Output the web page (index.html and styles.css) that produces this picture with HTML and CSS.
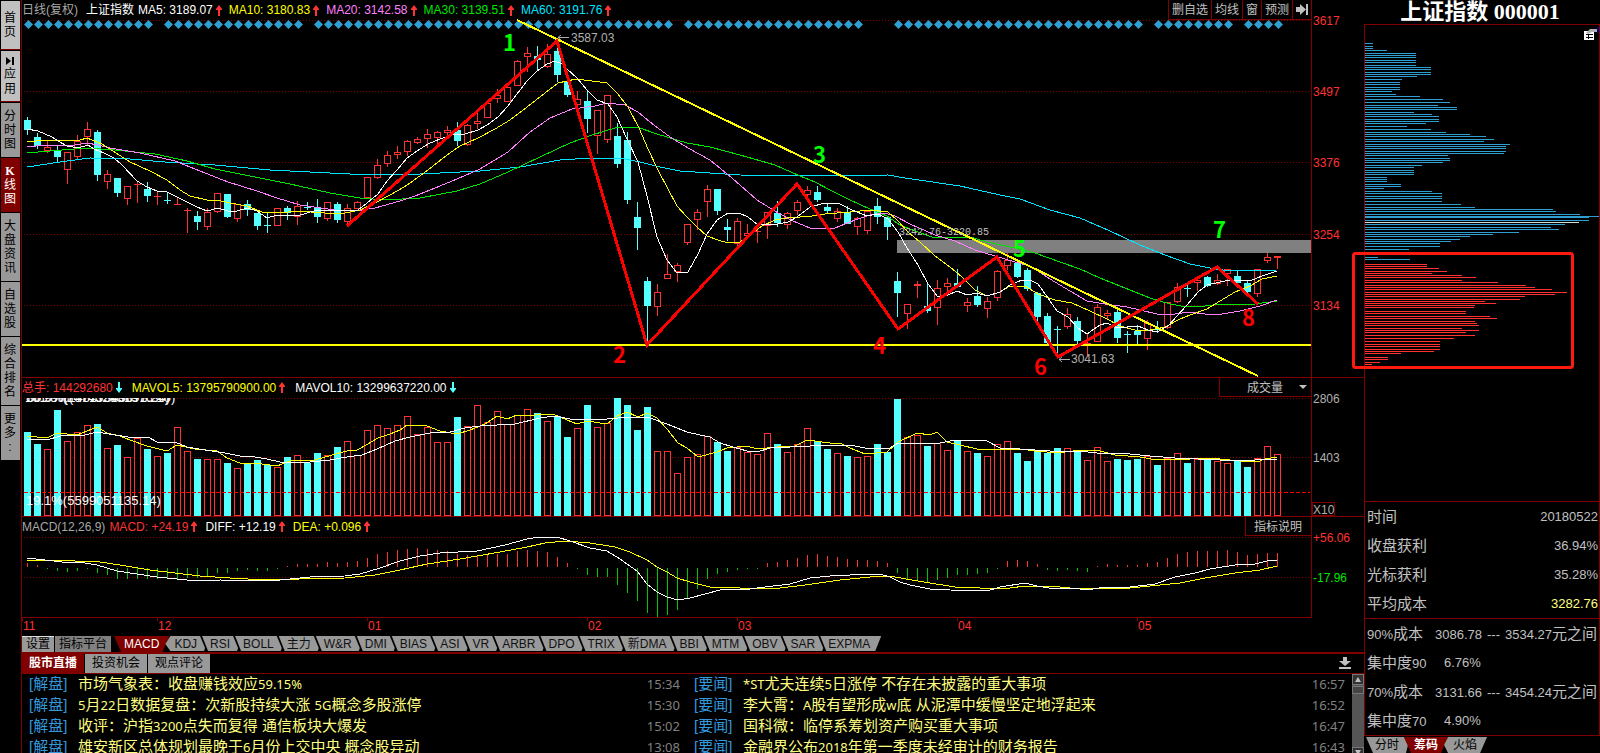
FILE: index.html
```html
<!DOCTYPE html>
<html lang="zh-CN">
<head>
<meta charset="utf-8">
<title>上证指数 000001</title>
<link rel="stylesheet" href="styles.css">
</head>
<body>
<svg class="defs" aria-hidden="true">
  <symbol id="up" viewBox="0 0 6 11"><path d="M2 11V5H0V4L3 0L6 4V5H4V11Z"/></symbol>
  <symbol id="down" viewBox="0 0 6 11"><path d="M2 0V6H0V7L3 11L6 7V6H4V0Z"/></symbol>
</svg>
<div class="app">
  <nav class="side">
    <button class="light tall">首页</button>
    <button class="light"><svg class="play" viewBox="0 0 8 8"><path d="M0 0L5 4L0 8ZM6 0H8V8H6Z"/></svg>应用</button>
    <button>分时图</button>
    <button class="on"><b>K</b>线图</button>
    <button>大盘资讯</button>
    <button>自选股</button>
    <button>综合排名</button>
    <button>更多:</button>
  </nav>

  <main class="center">
    <section class="pane">
      <header class="bar first">
        <span class="grey">日线(复权)</span>
        <span class="name">上证指数</span>
        <span class="item white">MA5: 3189.07<svg class="arrow"><use href="#up"/></svg></span>
        <span class="item yellow">MA10: 3180.83<svg class="arrow"><use href="#up"/></svg></span>
        <span class="item pink">MA20: 3142.58<svg class="arrow"><use href="#up"/></svg></span>
        <span class="item green">MA30: 3139.51<svg class="arrow"><use href="#up"/></svg></span>
        <span class="item aqua">MA60: 3191.76<svg class="arrow"><use href="#up"/></svg></span>
        <div class="tools">
          <button>删自选</button><button>均线</button><button>窗</button><button>预测</button><button aria-label="展开"><svg class="next" viewBox="0 0 12 11"><path d="M0 3H4V0L10 5.5L4 11V8H0ZM10 0H12V11H10Z"/></svg></button>
        </div>
      </header>
      <svg class="chart" id="price" viewBox="22 20 1342 357"></svg>
    </section>

    <section class="pane">
      <header class="bar wide">
        <span class="item red">总手: 144292680<svg class="arrow cyan"><use href="#down"/></svg></span>
        <span class="item yellow">MAVOL5: 13795790900.00<svg class="arrow"><use href="#up"/></svg></span>
        <span class="item white">MAVOL10: 13299637220.00<svg class="arrow cyan"><use href="#down"/></svg></span>
        <div class="picker"><select aria-label="指标"><option>成交量</option></select><i class="caret"></i></div>
      </header>
      <svg class="chart" id="volume" viewBox="22 397 1342 119"></svg>
    </section>

    <section class="pane">
      <header class="bar">
        <span class="lead grey">MACD(12,26,9)</span>
        <span class="item red">MACD: +24.19<svg class="arrow"><use href="#up"/></svg></span>
        <span class="item white">DIFF: +12.19<svg class="arrow"><use href="#up"/></svg></span>
        <span class="item yellow">DEA: +0.096<svg class="arrow"><use href="#up"/></svg></span>
        <button class="explain">指标说明</button>
      </header>
      <svg class="chart" id="macd" viewBox="22 536 1342 100"></svg>
    </section>

    <div class="indicators">
      <button class="set">设置</button><button class="set dark">指标平台</button>
      <button class="tab on">MACD</button><button class="tab after">KDJ</button><button class="tab">RSI</button><button class="tab">BOLL</button><button class="tab">主力</button><button class="tab">W&amp;R</button><button class="tab">DMI</button><button class="tab">BIAS</button><button class="tab">ASI</button><button class="tab">VR</button><button class="tab">ARBR</button><button class="tab">DPO</button><button class="tab">TRIX</button><button class="tab">新DMA</button><button class="tab">BBI</button><button class="tab">MTM</button><button class="tab">OBV</button><button class="tab">SAR</button><button class="tab last">EXPMA</button>
    </div>

    <section class="news">
      <header class="newsbar">
        <button class="on">股市直播</button><button>投资机会</button><button>观点评论</button>
        <svg class="save" viewBox="0 0 12 12"><path d="M4 0H8V4H12L6 9L0 4H4ZM0 10H12V12H0Z"/></svg>
      </header>
      <div class="feeds">
        <ul>
          <li><span class="tag">[解盘]</span><a href="#">市场气象表：收盘赚钱效应<span class="num">59.15%</span></a><time>15:34</time></li>
          <li><span class="tag">[解盘]</span><a href="#"><span class="num">5</span>月<span class="num">22</span>日数据复盘：次新股持续大涨 <span class="num">5G</span>概念多股涨停</a><time>15:30</time></li>
          <li><span class="tag">[解盘]</span><a href="#">收评：沪指<span class="num">3200</span>点失而复得 通信板块大爆发</a><time>15:02</time></li>
          <li><span class="tag">[解盘]</span><a href="#">雄安新区总体规划最晚于<span class="num">6</span>月份上交中央 概念股异动</a><time>13:08</time></li>
        </ul>
        <ul>
          <li><span class="tag">[要闻]</span><a href="#"><span class="num">*ST</span>尤夫连续<span class="num">5</span>日涨停 不存在未披露的重大事项</a><time>16:57</time></li>
          <li><span class="tag">[要闻]</span><a href="#">李大霄：<span class="num">A</span>股有望形成<span class="num">w</span>底 从泥潭中缓慢坚定地浮起来</a><time>16:52</time></li>
          <li><span class="tag">[要闻]</span><a href="#">国科微：临停系筹划资产购买重大事项</a><time>16:47</time></li>
          <li><span class="tag">[要闻]</span><a href="#">金融界公布<span class="num">2018</span>年第一季度未经审计的财务报告</a><time>16:43</time></li>
        </ul>
        <div class="scroll">
          <button aria-label="向上"><i class="tri"></i></button>
          <div class="thumb"></div>
          <button class="end" aria-label="向下"><i class="tri flip"></i></button>
        </div>
      </div>
    </section>
  </main>

  <aside class="right">
    <h1>上证指数 000001</h1>
    <div class="chips">
      <svg class="dist" id="dist" viewBox="1365 25 234 476"></svg>
      <dl class="stats">
        <div><dt>时间</dt><dd>20180522</dd></div>
        <div><dt>收盘获利</dt><dd>36.94%</dd></div>
        <div><dt>光标获利</dt><dd>35.28%</dd></div>
        <div><dt>平均成本</dt><dd class="cost">3282.76</dd></div>
      </dl>
      <dl class="stats ranges">
        <div><dt><span>90%</span>成本</dt><dd class="span"><span>3086.78</span><span>---</span><span><span>3534.27</span><b>元之间</b></span></dd></div>
        <div><dt>集中度<span>90</span></dt><dd class="pct">6.76%</dd></div>
        <div><dt><span>70%</span>成本</dt><dd class="span"><span>3131.66</span><span>---</span><span><span>3454.24</span><b>元之间</b></span></dd></div>
        <div><dt>集中度<span>70</span></dt><dd class="pct">4.90%</dd></div>
      </dl>
    </div>
    <div class="foot"><button>分时</button><button class="on">筹码</button><button class="after">火焰</button></div>
  </aside>
</div>
<script src="chart.js"></script>
</body>
</html>
```

FILE: styles.css
```css
* { box-sizing: border-box; }
body {
  margin: 0;
  background: #000;
  color: #c0c0c0;
  font: 12px/19px "Liberation Sans", "Noto Sans CJK SC", sans-serif;
}
button, select { font: inherit; color: inherit; background: none; border: 0; padding: 0; margin: 0; white-space: nowrap; }
ul, dl, dd, h1 { margin: 0; padding: 0; }
.defs { display: none; }
svg { display: block; }
.app { display: grid; grid-template-columns: 21px minmax(0, 1fr) 236px; height: 100vh; min-height: 753px; }

/* left navigation */
.side { display: flex; flex-direction: column; gap: 1px; padding: 1px 1px 0; align-items: stretch; }
.side button {
  background: #999; color: #000; line-height: 14px; padding: 6px 4px 6px 3px;
  white-space: normal; line-break: anywhere; text-align: center;
}
.side .light { background: #c0c0c0; box-shadow: 0 1px 0 #800000; margin-bottom: 1px; }
.side .light + .light { line-height: 15px; padding-top: 4px; padding-bottom: 4px; }
.side .tall { padding-top: 10px; padding-bottom: 10px; }
.side .on { background: #800000; color: #fff; }
.side b { font: bold 12px/14px "Liberation Serif", serif; display: block; }
.play { width: 8px; height: 8px; margin: 2px auto; }

/* chart panes */
.center { display: flex; flex-direction: column; min-width: 0; border-left: 1px solid #800000; }
.pane + .pane { border-top: 1px solid #800000; }
.bar { display: flex; align-items: stretch; height: 19px; line-height: 20px; margin-right: 52px; border-right: 1px solid #800000; white-space: nowrap; }
.bar.first { height: 20px; line-height: 21px; }
.item { display: flex; align-items: center; gap: 3px; margin-right: 8px; }
.bar.first .item { margin-right: 7px; }
.wide .item { margin-right: 10px; }
.name { color: #fff; margin: 0 4px 0 8px; }
.lead { margin-right: 4px; }
.arrow { width: 6px; height: 11px; fill: #f33; }
.arrow.cyan { fill: #5ff; }
.grey { color: #a8a8a8; }
.white { color: #fff; }
.yellow { color: #ff0; }
.pink { color: #ff80ff; }
.green { color: #00e600; }
.aqua { color: #00e5ff; }
.red { color: #f33; }
.tools { display: flex; margin-left: auto; border-bottom: 1px solid #800000; }
.tools button { border-left: 1px solid #800000; padding: 0 3px; line-height: 20px; }
.next { width: 12px; height: 11px; fill: #c0c0c0; }
.picker { position: relative; margin-left: auto; border-left: 1px solid #800000; border-bottom: 1px solid #800000; }
.picker select { appearance: none; width: 91px; padding-left: 27px; line-height: 20px; height: 18px; }
.caret { position: absolute; right: 4px; top: 7px; border: 4px solid transparent; border-top-color: #c0c0c0; border-bottom: 0; }
.explain { margin-left: auto; padding: 0 9px 0 8px; border-left: 1px solid #800000; border-bottom: 1px solid #800000; line-height: 20px; }
.chart { width: 100%; height: auto; overflow: visible; }
.chart text { font: 12px "Liberation Sans", sans-serif; }
.chart .mark { font: bold 22px "Noto Sans CJK SC", sans-serif; }
.chart .gap { font: 10px "Liberation Mono", monospace; }
.chart .ratio { font-size: 13px; }

/* indicator tabs */
.indicators { display: flex; height: 18px; line-height: 17px; border-bottom: 2px solid #800000; color: #000; }
.set { background: #999; padding: 0 4px; margin-right: 1px; border-top: 1px solid #ddd; line-height: 15px; }
.set.dark { background: #808080; border-top-color: #808080; margin-right: 3px; }
.tab {
  background: #999; color: #111; padding: 0 9px; margin-left: -5px; height: 15px;
  clip-path: polygon(1px 0, calc(100% - 6px) 0, calc(100% - 1px) 12px, calc(100% - 2px) 100%, 7px 100%);
}
.tab.on { background: #800000; color: #fff; padding: 0 10px; margin-left: 0; clip-path: polygon(0 0, 100% 0, calc(100% - 7px) 100%, 7px 100%); height: 16px; }
.tab.after { margin-left: -4px; clip-path: polygon(5px 0, calc(100% - 6px) 0, calc(100% - 1px) 12px, calc(100% - 2px) 100%, 5px 100%, 0 8px); }
.tab.last { padding-right: 11px; clip-path: polygon(1px 0, 100% 0, calc(100% - 6px) 100%, 7px 100%); }

/* news */
.news { display: flex; flex-direction: column; flex: 1; min-height: 0; border-bottom: 1px solid #800000; }
.newsbar { display: flex; gap: 1px; height: 20px; border-bottom: 1px solid #800000; }
.newsbar button { background: #999; color: #000; padding: 0 7px; }
.newsbar .on { background: #800000; color: #fff; font-weight: bold; }
.save { width: 12px; height: 12px; margin: 3px 13px 0 auto; fill: #c0c0c0; }
.feeds { display: flex; flex: 1; min-height: 0; overflow: hidden; }
.feeds ul { flex: 1; min-width: 0; list-style: none; padding: 0 7px; }
.feeds li { display: flex; height: 21px; line-height: 19px; font-size: 15px; white-space: nowrap; }
.tag { flex: 0 0 49px; color: #3399dd; }
.feeds a { flex: 1; color: #ffff80; text-decoration: none; }
.num, time { font-size: 13px; font-family: "Noto Sans", sans-serif; }
time { color: #808080; line-height: 21px; }
.scroll { display: flex; flex-direction: column; width: 12px; background: #555; }
.scroll button { height: 11px; background: #333; border: 1px solid #777; display: flex; align-items: center; justify-content: center; }
.scroll .end { margin-top: auto; }
.thumb { height: 8px; margin-top: 1px; background: #444; border: 1px solid #777; }
.tri { border: 3px solid transparent; border-bottom: 5px solid #c0c0c0; border-top: 0; }
.flip { transform: rotate(180deg); }

/* right panel */
.right { display: flex; flex-direction: column; }
h1 { height: 24px; padding-right: 4px; color: #fff; font: bold 22px/24px "Liberation Serif", "Noto Sans CJK SC", serif; text-align: center; }
.chips { border: 1px solid #800000; }
.dist { width: 100%; height: auto; overflow: visible; }
.stats { border-top: 1px solid #800000; font-size: 13px; }
.stats div { display: flex; justify-content: space-between; align-items: center; height: 29px; padding: 0 1px 0 2px; }
.ranges div { padding-right: 2px; }
.stats dt, .stats b { font-size: 15px; font-weight: normal; }
.stats dt span { font-size: 13px; }
.stats .cost { color: #ffff80; }
.ranges dt { flex: 0 0 68px; }
.ranges .span { display: flex; flex: 1; justify-content: space-between; align-items: baseline; }
.ranges .pct { flex: 1; padding-left: 9px; }
.foot { display: flex; height: 16px; line-height: 17px; padding-left: 2px; margin-top: 1px; }
.foot button { background: #999; color: #000; padding: 0 9px; clip-path: polygon(0 0, calc(100% - 4px) 0, 100% 8px, calc(100% - 2px) 100%, 7px 100%); }
.foot .on { background: #800000; color: #fff; margin-left: -4px; clip-path: polygon(0 0, 100% 0, calc(100% - 7px) 100%, 7px 100%); font-weight: bold; padding: 0 10px; }
.foot .after { margin-left: -4px; padding-right: 10px; clip-path: polygon(4px 0, 100% 0, calc(100% - 7px) 100%, 4px 100%, 0 8px); }
```

FILE: chart.js
```js
const NS = 'http://www.w3.org/2000/svg';
const STEP = 10, X0 = 27;
const RED = '#ff3232', CYAN = '#54ffff', FRAME = '#800000', GREEN = '#00c800';

function add(svg, tag, attrs, text) {
  const el = document.createElementNS(NS, tag);
  for (const k in attrs) el.setAttribute(k, attrs[k]);
  if (text) el.textContent = text;
  svg.appendChild(el);
  return el;
}
const rect = (s, x, y, w, h, fill) => add(s, 'rect', { x, y, width: w, height: h, fill });
const box = (s, x, y, w, h, stroke) => add(s, 'rect', { x: x + 0.5, y: y + 0.5, width: w - 1, height: h - 1, fill: '#000', stroke });
const label = (s, x, y, fill, text, cls) => add(s, 'text', { x, y, fill, class: cls || '' }, text);
function curve(s, pts, stroke, width = 1) {
  return add(s, 'polyline', { points: pts, fill: 'none', stroke, 'stroke-width': width, 'shape-rendering': 'crispEdges' });
}
function dotted(s, y, stroke = FRAME, dash = '1 2') {
  add(s, 'line', { x1: 24, x2: 1310, y1: y + 0.5, y2: y + 0.5, stroke, 'stroke-dasharray': dash, 'shape-rendering': 'crispEdges' });
}

/* kind, high, body top, body bottom, low */
const candles = `c 117 120 130 135|c 133 137 146 149|r 141 147 151 153|c 146 151 157 163|r 152 152 170 184|r 135 141 157 160|r 122 129 137 145|c 130 132 175 181|r 170 174 182 189|c 178 178 193 197
r 186 186 199 205|r 182 184 185 203|c 182 189 196 202|r 191 196 197 205|c 193 200 201 204|r 197 204 205 205|r 208 210 211 233|c 211 216 222 230|r 208 212 227 230|r 193 193 212 213
c 194 194 217 218|r 204 204 219 222|c 200 204 210 216|c 213 213 226 230|c 212 225 226 233|r 208 208 226 226|c 206 208 213 220|r 201 206 217 225|c 202 207 208 210|c 199 208 217 223
r 202 202 219 221|c 202 204 220 223|r 204 208 222 226|r 201 202 209 209|r 177 177 198 198|r 159 165 178 179|r 151 155 164 167|r 146 152 155 159|r 140 141 152 156|r 137 139 143 144
r 129 134 139 148|r 131 132 138 144|r 126 130 133 135|c 122 130 141 146|r 124 125 145 146|r 113 121 124 129|r 102 103 118 118|r 89 95 99 103|r 87 87 102 102|r 60 61 86 86
r 47 53 57 72|c 46 56 60 71|r 44 54 67 68|c 40 51 75 82|c 79 81 95 97|r 91 99 105 115|c 91 101 119 133|r 110 110 136 154|r 95 95 140 143|c 123 136 164 168
c 132 140 200 204|c 202 217 228 250|c 277 281 306 343|r 284 292 307 316|r 254 274 279 279|r 263 265 272 282|r 224 224 243 245|r 209 212 220 230|r 185 189 202 217|c 189 189 211 215
c 219 227 230 241|r 218 221 244 246|r 224 233 236 237|r 227 231 232 243|r 212 212 226 239|c 201 213 223 227|r 212 213 225 229|r 200 202 211 215|r 186 190 195 196|c 186 192 200 202
c 204 207 211 213|r 208 211 219 222|c 206 212 224 224|r 217 218 227 235|r 210 211 231 234|c 198 206 217 224|c 216 217 227 240|c 272 281 293 317|r 304 304 314 329|r 281 284 286 298
c 284 306 311 313|r 280 288 308 325|r 278 283 287 292|c 269 283 287 287|r 298 302 306 312|c 286 296 305 307|r 297 301 309 318|r 270 271 298 301|r 253 260 266 270|c 263 263 277 278
c 268 270 289 291|c 292 293 317 321|c 313 316 343 344|c 326 329 330 354|r 308 314 327 329|c 317 321 341 344|r 333 343 344 356|r 304 307 342 342|r 310 313 316 320|c 310 312 338 343
c 331 334 335 353|c 325 331 335 344|r 320 323 339 350|c 321 329 330 333|r 302 302 328 329|r 283 287 302 303|c 284 288 289 297|r 278 280 283 291|c 276 277 286 287|r 274 280 284 285
r 269 269 274 286|c 270 276 283 284|c 281 283 292 293|r 269 269 294 297|r 253 257 261 263|r 256 256 258 269`
  .split(/[|\n]/).map(s => { const [k, ...v] = s.split(' '); return [k, ...v.map(Number)]; });

const volumes = `432 444 449 410 441 432 425 424 448 445 457 438 449 456 453 427 451 459 459 459 463 468 463 460 465 467 457 455 463 453
455 447 441 455 430 425 428 425 416 434 427 442 442 417 426 405 422 411 424 415 409 413 421 416 437 428 405 427 423 398
405 430 407 451 451 473 457 454 436 442 451 447 452 454 433 444 452 444 428 441 449 453 456 457 456 444 452 399 437 435
446 443 450 440 451 453 456 444 441 453 461 450 453 448 448 450 460 447 461 459 460 459 456 465 458 453 463 459 458 461
463 461 467 458 446 454`.split(/\s+/).map(Number);

const bars = `563 565 569 571 572 571 569 573 575 579 579 579 579 579 579 579 578 578 577 573 573 571 570 571 571 569 566 564 564 564
562 563 562 561 558 554 552 550 549 548 549 550 551 554 555 555 555 554 554 551 550 551 552 557 563 569 575 577 577 585
593 601 613 617 615 610 598 589 579 574 572 570 569 569 563 562 560 558 555 554 556 557 559 560 560 561 563 573 579 580
582 580 578 575 575 574 573 569 561 560 561 564 570 571 570 571 572 566 564 565 565 565 563 562 558 554 552 551 551 551
550 552 555 554 553 553`.split(/\s+/).map(Number);

/* price pane */
const price = document.getElementById('price');
[[20, 3617], [91, 3497], [162, 3376], [234, 3254], [305, 3134]].forEach(([y, v]) => {
  dotted(price, y);
  label(price, 1313, y + 5, RED, String(v));
});
rect(price, 1311, 20, 1, 357, FRAME);
rect(price, 897, 240, 414, 13, '#808080');
const noMark = new Set([13, 28, 65, 84, 85, 86, 112, 121]);
for (let i = 0; i < 126; i++) {
  if (noMark.has(i)) continue;
  const x = X0 + 1.5 + i * STEP;
  add(price, 'path', { d: `M${x} 20l4.5 4.5l-4.5 4.5l-4.5 -4.5z`, fill: '#2e9fd0' });
}
candles.forEach(([k, hi, top, bot, lo], i) => {
  const x = X0 + i * STEP, col = k === 'c' ? CYAN : RED;
  rect(price, x, hi, 1, Math.max(1, lo - hi), col);
  if (k === 'c' || bot - top <= 2) rect(price, x - 3, top, 7, bot - top, col);
  else box(price, x - 3, top, 7, bot - top, col);
});
curve(price, '27,167 60,162 90,158 130,159 165,162 215,165 270,170 350,174 420,174 480,171 520,167 560,160 590,158 620,158 640,162 660,167 680,171 740,175 800,176 888,175 905,178 960,186 1000,195 1020,199 1050,210 1080,218 1110,231 1140,245 1165,255 1190,264 1215,269 1230,271 1277,270', '#00e5ff');
curve(price, '27,153 50,151 87,148 115,150 155,154 187,161 215,169 250,176 290,184 330,193 360,198 385,200 420,198 457,191 480,184 508,172 540,157 570,143 592,135 615,128 637,127 657,134 687,143 710,147 740,155 775,165 800,176 815,182 830,190 850,200 870,209 887,216 900,225 915,231 935,238 970,237 987,242 1015,248 1035,253 1060,262 1080,269 1100,278 1125,288 1150,298 1170,304 1187,307 1205,306 1222,304 1255,304 1277,301', '#00e600');
curve(price, '27,147 45,145 75,145 87,143 98,145 110,148 140,153 175,161 200,171 228,182 257,191 277,198 300,205 335,210 355,211 375,208 400,201 415,196 440,186 457,179 480,169 508,152 530,132 550,118 572,109 595,106 607,103 625,105 638,112 650,122 670,137 688,148 710,160 732,178 757,200 778,213 793,221 810,228 820,228 835,228 855,220 870,215 885,213 895,216 910,224 935,235 955,241 975,250 995,256 1015,262 1030,266 1050,279 1070,291 1087,301 1105,304 1127,307 1157,314 1175,314 1190,312 1205,314 1222,314 1240,311 1260,306 1277,300', '#ff80ff');
curve(price, '27,142 45,140 80,140 87,138 102,144 116,153 130,162 150,171 167,180 180,190 190,196 207,200 217,200 230,203 247,206 262,212 280,213 297,211 325,213 345,213 360,210 375,203 390,195 404,187 410,183 428,170 447,155 460,146 478,138 495,129 510,120 527,107 545,93 558,83 576,79 592,81 607,83 617,93 628,107 639,128 648,149 658,170 668,189 677,206 687,217 697,227 707,236 718,240 728,243 740,242 750,235 762,226 775,220 787,218 800,217 812,216 825,214 850,212 870,210 888,212 897,220 908,232 920,242 935,256 950,267 962,277 975,290 987,296 1000,292 1010,286 1025,286 1038,294 1055,300 1072,303 1090,311 1107,319 1120,326 1135,330 1150,330 1165,327 1180,319 1190,315 1207,309 1220,301 1235,292 1250,286 1262,279 1277,276', '#ffff00');
curve(price, '27,129 38,131 52,137 58,141 67,146 78,148 88,145 94,149 104,153 114,158 122,165 137,181 147,187 157,191 167,192 177,197 187,202 197,207 207,211 218,208 228,211 237,211 247,208 257,211 267,218 277,215 297,216 307,213 317,210 347,211 358,210 367,203 378,194 387,181 397,170 407,158 417,151 428,144 440,139 452,135 465,134 478,130 487,125 498,117 508,106 517,94 527,81 537,71 547,64 555,61 562,64 567,69 577,78 587,90 597,100 608,104 617,117 627,139 638,162 647,196 657,237 667,260 677,273 688,272 698,254 707,234 717,220 728,213 739,213 748,217 758,225 778,224 788,222 797,217 810,207 825,203 838,203 852,210 867,216 878,214 888,219 898,232 907,248 918,265 928,284 938,297 948,295 957,291 967,295 977,293 987,296 1000,292 1010,285 1022,280 1030,280 1038,284 1048,298 1057,311 1068,317 1078,328 1087,334 1094,329 1100,325 1107,323 1117,328 1127,327 1138,326 1148,330 1157,332 1168,326 1177,316 1187,305 1198,292 1207,285 1220,282 1230,280 1250,281 1262,276 1277,271', '#ffffff');
curve(price, '22,345 1311,345', '#ffff00', 2);
curve(price, '517,20 1258,376', '#ffff00', 2);
curve(price, '347,226 557,41 647,345 797,184 898,329 997,257 1058,357 1217,267 1258,304', '#ff0000', 3);
[[571, 42, '3587.03', 558, 37], [1071, 363, '3041.63', 1059, 359]].forEach(([x, y, t, ax, ay]) => {
  label(price, x, y, '#b0b0b0', t);
  add(price, 'path', { d: `M${ax} ${ay + 0.5}h11M${ax + 3} ${ay - 2}l-3 2.5l3 2.5`, stroke: '#b0b0b0', fill: 'none' });
});
label(price, 899, 235, '#c0c0c0', '3242.76-3220.85', 'gap');
[[503, 51, '#0f0', 1], [613, 363, '#f00', 2], [813, 163, '#0f0', 3], [873, 354, '#f00', 4],
 [1013, 257, '#0f0', 5], [1034, 375, '#f00', 6], [1213, 238, '#0f0', 7], [1242, 326, '#f00', 8]]
  .forEach(([x, y, c, n]) => label(price, x, y, c, String(n), 'mark'));

/* volume pane */
const volume = document.getElementById('volume');
const clip = add(volume, 'clipPath', { id: 'volclip' });
rect(clip, 22, 398, 1289, 118, '#fff');
dotted(volume, 398);
dotted(volume, 457);
rect(volume, 1311, 397, 1, 119, FRAME);
volumes.forEach((y, i) => {
  const x = X0 - 3 + i * STEP;
  if (candles[i][0] === 'c') rect(volume, x, y, 7, 516 - y, CYAN);
  else box(volume, x, y, 7, 516 - y, RED);
});
dotted(volume, 492, '#ff0000', '4 2');
curve(volume, '27,436 47,438 57,433 77,435 97,427 107,433 120,436 130,440 147,446 167,451 177,445 195,449 217,451 227,458 240,463 262,464 277,466 290,461 315,460 332,455 347,451 357,450 368,444 378,438 390,434 400,430 407,425 427,426 440,431 457,434 470,430 485,424 497,416 507,419 517,415 530,416 540,414 555,415 567,420 577,424 587,421 607,424 617,416 627,412 638,417 647,413 657,418 667,429 678,443 687,448 698,457 717,452 727,448 747,446 757,449 777,447 795,446 807,440 830,443 842,444 850,448 865,454 887,452 898,442 917,433 930,435 937,432 947,442 960,445 977,449 990,450 1020,449 1035,451 1058,453 1080,450 1100,451 1115,455 1140,457 1157,460 1175,459 1190,459 1210,458 1240,461 1257,462 1265,459 1277,457', '#ffff00');
curve(volume, '27,439 47,440 60,436 85,435 97,432 115,435 135,438 148,437 157,442 175,442 187,447 205,450 225,453 240,456 255,457 267,459 280,462 310,462 330,460 347,457 362,455 377,449 395,441 410,437 430,433 450,432 465,428 480,426 515,424 540,418 555,416 575,420 590,419 607,419 630,417 650,418 667,424 687,432 700,435 710,437 720,443 733,447 747,451 757,452 770,448 790,447 830,445 855,446 865,448 890,448 898,443 920,444 940,443 955,440 987,441 1000,448 1020,449 1050,451 1080,451 1105,454 1120,453 1150,456 1175,458 1220,460 1247,461 1255,460 1277,459', '#ffffff');
const clipped = add(volume, 'g', { 'clip-path': 'url(#volclip)' });
['161.8%(47432951976.10)', '80.9%(23715546891.24)', '50.0%(14657389673.30)'].forEach((t, i) => label(clipped, 25 + i, 402, '#fff', t, 'ratio'));
label(volume, 26, 505, '#fff', '19.1%(5599051135.14)', 'ratio');
label(volume, 1313, 403, '#b0b0b0', '2806');
label(volume, 1313, 462, '#b0b0b0', '1403');
box(volume, 1312, 502, 23, 14, FRAME);
label(volume, 1313, 514, '#b0b0b0', 'X10');

/* MACD pane */
const macd = document.getElementById('macd');
dotted(macd, 537);
dotted(macd, 577);
rect(macd, 1311, 536, 1, 82, FRAME);
bars.forEach((y, i) => {
  const x = X0 + i * STEP;
  if (y < 568) rect(macd, x, y, 1, 567 - y, RED);
  else rect(macd, x, 568, 1, y - 568, GREEN);
});
curve(macd, '27,560 60,560 75,561 100,562 120,565 150,570 175,573 200,576 230,578 265,580 300,579 345,578 375,575 400,570 427,564 460,559 500,552 527,547 545,543 565,541 590,543 615,547 630,552 647,560 657,567 667,572 677,578 690,582 710,587 740,588 780,588 805,585 840,580 880,576 895,577 912,580 930,583 955,587 980,588 1010,588 1025,586 1050,586 1070,588 1130,588 1150,586 1180,583 1205,578 1235,573 1260,570 1277,566', '#ffff00');
curve(macd, '27,558 45,560 62,562 85,563 97,565 107,568 117,571 137,574 157,577 177,579 197,581 220,580 270,581 290,579 310,577 345,576 360,574 380,568 400,561 420,556 440,553 477,551 505,545 527,539 540,537 557,537 570,541 590,548 607,551 620,559 637,571 647,584 657,592 667,597 678,600 690,598 705,594 720,590 750,589 765,587 790,584 810,578 830,576 850,575 880,574 890,577 900,582 910,585 930,589 950,590 987,591 1000,587 1025,583 1037,586 1055,589 1072,588 1087,590 1105,587 1130,587 1155,584 1175,577 1195,573 1210,569 1235,565 1255,564 1267,561 1277,560', '#ffffff');
label(macd, 1313, 542, RED, '+56.06');
label(macd, 1313, 582, '#00e600', '-17.96');
rect(macd, 22, 617, 1290, 1, FRAME);
[[22, '11'], [157, '12'], [367, '01'], [587, '02'], [737, '03'], [957, '04'], [1137, '05']].forEach(([x, t]) => {
  rect(macd, x, 617, 1, 4, FRAME);
  label(macd, x + 1, 630, RED, t);
});

/* chip distribution: y, length */
const dist = document.getElementById('dist');
const blue = `43 8 46 8 48 8 50 22 53 51 55 51 57 51 60 51 62 51 65 51 67 66 69 66 72 66 74 66 76 52 79 37 82 35 84 35 87 35 89 35 91 27 94 31 96 55 99 78 102 85 105 73 107 92 109 92 112 49 114 67 116 74 119 74 121 74 123 61 126 42 129 66 132 81 134 105 136 121 139 129 141 119 144 145 146 141 148 141 151 141 153 139 155 83 158 85 160 85 162 78 165 57 167 49 170 49 172 49 174 49 177 22 179 22 181 22 184 36 186 36 188 19 191 67 193 77 196 77 198 77 201 77 204 96 207 110 209 188 211 191 214 215 216 234 217 224 220 224 224 200 227 186 229 194 232 154 234 128 236 105 239 95 241 86 243 75 246 75 249 44 257 13 259 45`.split(' ');
const red = `264 62 266 62 268 74 271 82 273 67 275 97 277 111 280 97 282 133 285 161 287 170 289 187 292 202 294 190 296 160 299 155 301 120 303 131 305 110 307 109 311 101 313 101 316 125 318 132 321 110 323 112 325 114 328 97 330 114 332 101 335 110 338 89 341 75 344 75 346 75 349 75 351 69 353 36 357 23 359 23 362 15 364 7`.split(' ');
for (let i = 0; i < blue.length; i += 2) rect(dist, 1365, +blue[i], +blue[i + 1], 1, '#2e9fd0');
for (let i = 0; i < red.length; i += 2) rect(dist, 1365, +red[i], +red[i + 1], 1, RED);
rect(dist, 1365, 222, 214, 1, '#d8d8d8');
add(dist, 'rect', { x: 1353.5, y: 253.5, width: 219, height: 114, rx: 2, fill: 'none', stroke: '#ff1a10', 'stroke-width': 3 });
/* settings glyph */
rect(dist, 1584, 31, 10, 9, '#fff');
rect(dist, 1586, 34, 7, 1, '#000');
rect(dist, 1586, 37, 7, 1, '#000');
rect(dist, 1588, 34, 1, 5, '#000');
add(dist, 'path', { d: 'M1586 33l4 -4h7v3h-5l-4 2z', fill: '#b0b0b0' });
rect(dist, 1597, 27, 2, 6, '#000080');
```
